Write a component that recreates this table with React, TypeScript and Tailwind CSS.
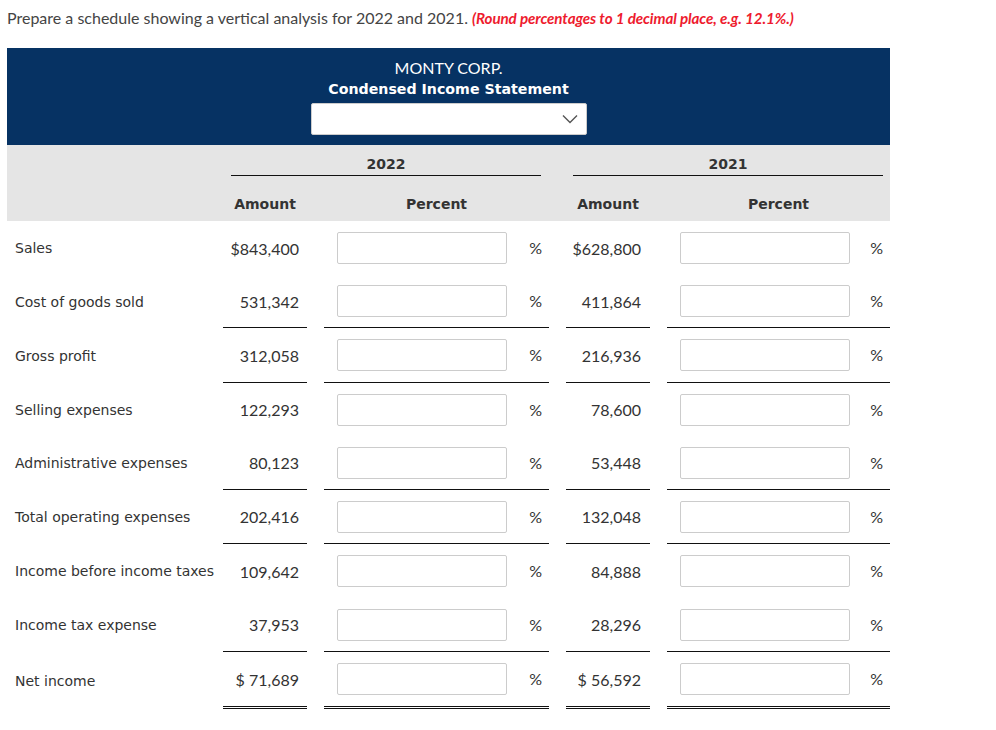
type Row = {
  label: string;
  a2022: string;
  a2021: string;
  h: string;
  line?: "single" | "double";
};

const ROWS: Row[] = [
  { label: "Sales", a2022: "$843,400", a2021: "$628,800", h: "h-[54px]" },
  { label: "Cost of goods sold", a2022: "531,342", a2021: "411,864", h: "h-[53px]", line: "single" },
  { label: "Gross profit", a2022: "312,058", a2021: "216,936", h: "h-[55px]", line: "single" },
  { label: "Selling expenses", a2022: "122,293", a2021: "78,600", h: "h-[53px]" },
  { label: "Administrative expenses", a2022: "80,123", a2021: "53,448", h: "h-[54px]", line: "single" },
  { label: "Total operating expenses", a2022: "202,416", a2021: "132,048", h: "h-[54px]", line: "single" },
  { label: "Income before income taxes", a2022: "109,642", a2021: "84,888", h: "h-[54px]" },
  { label: "Income tax expense", a2022: "37,953", a2021: "28,296", h: "h-[54px]", line: "single" },
  { label: "Net income", a2022: "$ 71,689", a2021: "$ 56,592", h: "h-[57px]", line: "double" },
];

const GRID = "grid grid-cols-[216px_84px_17px_225px_17px_84px_17px_223px]";
const BOLD = "font-['DejaVu_Sans',sans-serif] text-[14px] font-bold text-[#333]";

function lineCls(line?: "single" | "double") {
  if (line === "single") return "border-b border-[#111]";
  if (line === "double") return "border-b-[3px] border-double border-[#111]";
  return "";
}

function PercentCell({ line }: { line?: "single" | "double" }) {
  return (
    <div className={`flex items-center justify-between pl-[13px] pr-[7px] ${lineCls(line)}`}>
      <input className="h-[32px] w-[170px] rounded-[2px] border border-[#ccc] bg-white outline-none" />
      <span className="text-[16px] text-[#333]">%</span>
    </div>
  );
}

export default function App() {
  return (
    <div className="min-h-[730px] bg-white px-[7px] pt-[7px] font-['Lato',sans-serif] text-[#333]">
      <p className="h-[21px] text-[16px] leading-[21px] text-[#444]">
        Prepare a schedule showing a vertical analysis for 2022 and 2021.{" "}
        <span className="text-[15.2px] font-bold italic tracking-[-0.1px] text-[#ee1b2e]">
          (Round percentages to 1 decimal place, e.g. 12.1%.)
        </span>
      </p>

      <div className="mt-[20px] w-[883px]">
        <div className="flex h-[97px] flex-col items-center bg-[#063263] pt-[9px]">
          <div className="text-[16px] leading-[21px] text-white">MONTY CORP.</div>
          <div className="font-['DejaVu_Sans',sans-serif] text-[14.2px] font-bold leading-[22px] text-white">
            Condensed Income Statement
          </div>
          <div className="mt-[3px] flex h-[32px] w-[276px] items-center justify-end rounded-[2px] border border-[#ccc] bg-white pr-[8px]">
            <svg width="16" height="10" viewBox="0 0 16 10" fill="none">
              <polyline points="1,1.5 8,8.5 15,1.5" stroke="#555" strokeWidth="1.4" />
            </svg>
          </div>
        </div>

        <div className="bg-[#e5e5e5] pt-[8px]">
          <div className={`${GRID} h-[23px]`}>
            <div />
            <div className={`col-span-3 mx-[8px] border-b border-[#111] text-center leading-[22px] ${BOLD}`}>2022</div>
            <div />
            <div className={`col-span-3 mx-[7px] border-b border-[#111] text-center leading-[22px] ${BOLD}`}>2021</div>
          </div>
          <div className={`${GRID} h-[45px] items-end pb-[6px] text-center ${BOLD}`}>
            <div />
            <div>Amount</div>
            <div />
            <div>Percent</div>
            <div />
            <div>Amount</div>
            <div />
            <div>Percent</div>
          </div>
        </div>

        {ROWS.map((r) => (
          <div key={r.label} className={`${GRID} ${r.h}`}>
            <div className="flex items-center whitespace-nowrap pl-[8px] pt-[1px] font-['DejaVu_Sans',sans-serif] text-[14px] text-[#333]">
              {r.label}
            </div>
            <div className={`flex items-center justify-end pr-[8px] pt-[1px] text-[16px] ${lineCls(r.line)}`}>{r.a2022}</div>
            <div />
            <PercentCell line={r.line} />
            <div />
            <div className={`flex items-center justify-end pr-[9px] pt-[1px] text-[16px] ${lineCls(r.line)}`}>{r.a2021}</div>
            <div />
            <PercentCell line={r.line} />
          </div>
        ))}
      </div>
    </div>
  );
}
